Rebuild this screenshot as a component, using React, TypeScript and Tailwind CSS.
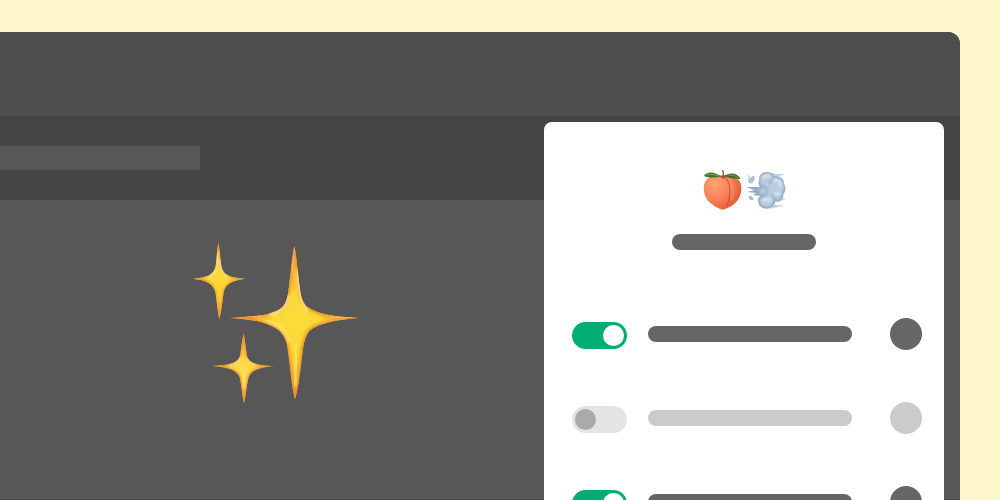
const star =
  "M343 48 C350 80 354 135 361 185 C365 212 374 226 387 234 C420 254 465 260 536 264 C465 270 420 279 390 301 C375 318 372 340 369 356 C362 405 357 470 345 508 C335 470 330 405 323 356 C320 335 314 317 296 301 C265 279 225 268 150 264 C225 260 265 256 296 239 C314 229 320 215 325 185 C332 135 336 80 343 48Z";
const smallTop =
  "M115 38 C119 58 121 85 124 108 C128 134 150 144 195 146 C155 152 137 161 131 186 C128 210 124 245 118 268 C113 245 110 210 106 186 C99 161 82 151 38 146 C80 143 101 136 107 109 C110 85 111 58 115 38Z";
const smallBottom =
  "M191 310 C194 328 197 350 200 373 C204 400 228 406 284 408 C232 412 212 423 205 444 C200 465 198 500 192 520 C187 500 184 465 180 444 C173 423 152 412 96 408 C152 406 176 399 181 373 C184 350 187 328 191 310Z";

function Sparkles() {
  return (
    <svg viewBox="0 0 570 555" className="h-[185px] w-[190px]" role="img" aria-label="Sparkles">
      <defs>
        <filter id="soft" x="-20%" y="-20%" width="140%" height="140%">
          <feGaussianBlur stdDeviation="4" />
        </filter>
        <filter id="fine" x="-20%" y="-20%" width="140%" height="140%">
          <feGaussianBlur stdDeviation="2.5" />
        </filter>
        <radialGradient id="gold" gradientUnits="userSpaceOnUse" cx="343" cy="270" r="235">
          <stop offset="0" stopColor="#fbdc36" />
          <stop offset=".5" stopColor="#fbd63a" />
          <stop offset="1" stopColor="#eda552" />
        </radialGradient>
        <radialGradient id="goldTop" gradientUnits="userSpaceOnUse" cx="117" cy="148" r="115">
          <stop offset="0" stopColor="#fddb35" />
          <stop offset=".5" stopColor="#fccf38" />
          <stop offset="1" stopColor="#e8a45a" />
        </radialGradient>
        <radialGradient id="goldBottom" gradientUnits="userSpaceOnUse" cx="191" cy="415" r="100">
          <stop offset="0" stopColor="#fee24d" />
          <stop offset=".5" stopColor="#fbc83a" />
          <stop offset="1" stopColor="#e49d52" />
        </radialGradient>
        <clipPath id="bigClip"><path d={star} /></clipPath>
        <clipPath id="topClip"><path d={smallTop} /></clipPath>
        <clipPath id="bottomClip"><path d={smallBottom} /></clipPath>
      </defs>
      <path d={star} fill="url(#gold)" />
      <g clipPath="url(#bigClip)" fill="none">
        <path d={star} stroke="#f19228" strokeWidth="12" filter="url(#soft)" />
        <path d="M353 120C355 175 362 225 384 242M327 195C321 230 302 247 268 256" stroke="#ffeaa0" strokeWidth="7" filter="url(#fine)" />
        <path d="M255 270C295 282 318 300 326 335" stroke="#fff080" strokeWidth="8" opacity=".75" filter="url(#fine)" />
        <path d="M348 340C350 375 348 420 345 470" stroke="#ffe765" strokeWidth="8" opacity=".8" filter="url(#fine)" />
        <path d="M342 80V180M235 264H275M430 264H500" stroke="#ffad30" strokeWidth="7" opacity=".8" filter="url(#fine)" />
        <path d="M343 52L337 120M170 261L240 259M455 261L520 263" stroke="#f7c08a" strokeWidth="3" opacity=".7" />
      </g>
      <path d={smallTop} fill="url(#goldTop)" />
      <g clipPath="url(#topClip)" fill="none">
        <path d={smallTop} stroke="#f19c2c" strokeWidth="7" filter="url(#fine)" />
        <path d="M114 66C112 108 108 132 84 144M121 90C123 124 129 133 145 141" stroke="#ffefb4" strokeWidth="5" filter="url(#fine)" />
      </g>
      <path d={smallBottom} fill="url(#goldBottom)" />
      <g clipPath="url(#bottomClip)" fill="none">
        <path d={smallBottom} stroke="#ef972c" strokeWidth="7" filter="url(#fine)" />
        <path d="M182 382C177 397 168 403 146 407M202 385C205 397 212 401 228 405M192 430V475" stroke="#fff090" strokeWidth="5" filter="url(#fine)" />
      </g>
    </svg>
  );
}

function Peach() {
  return (
    <svg viewBox="33 30 123 126" className="h-[42px] w-[41px]" role="img" aria-label="Peach">
      <defs>
        <radialGradient id="flesh" gradientUnits="userSpaceOnUse" cx="72" cy="72" r="95">
          <stop offset="0" stopColor="#fda375" />
          <stop offset=".5" stopColor="#f98054" />
          <stop offset="1" stopColor="#dc5036" />
        </radialGradient>
        <filter id="peachBlur"><feGaussianBlur stdDeviation="2.5" /></filter>
      </defs>
      <path d="M94 49C112 43 141 48 149 70C156 98 145 124 120 139C110 144 101 149 95 149C84 147 61 135 50 121C34 98 34 67 52 54C64 45 83 43 94 49Z" fill="url(#flesh)" />
      <path d="M103 52C113 62 118 81 117 101C116 116 112 127 107 136" fill="none" stroke="#c04a2a" strokeWidth="3" />
      <path d="M114 58C124 74 129 91 122 118" fill="none" stroke="#ffab7b" strokeWidth="5" opacity=".65" filter="url(#peachBlur)" />
      <path d="M39 48C46 34 68 33 91 49C74 54 53 54 39 48Z" fill="#40742b" />
      <path d="M99 48C117 36 138 38 149 57C132 57 114 54 99 48Z" fill="#386a28" />
      <path d="M47 45C60 41 74 44 84 48M110 46C122 43 132 47 141 53" fill="none" stroke="#79a645" strokeWidth="3" />
      <path d="M95 32C98 38 97 44 97 51" fill="none" stroke="#79604a" strokeWidth="4" strokeLinecap="round" />
      <path d="M86 49C92 45 102 45 108 50C103 53 99 55 97 57C93 55 90 52 86 49Z" fill="#a2572f" />
    </svg>
  );
}

const cloud =
  "M205 60C202 47 212 36 227 36C240 35 247 42 250 49C268 46 280 58 278 71C286 80 284 96 276 103C280 116 268 127 253 124C251 137 240 146 226 146C211 146 200 134 201 119C202 113 206 110 209 108L186 104L197 98L168 96L192 91L166 81L207 81C202 74 202 66 205 60Z";

function Puff() {
  return (
    <svg viewBox="162 30 126 126" className="size-[42px]" role="img" aria-label="Dash">
      <defs>
        <filter id="mist" x="-30%" y="-30%" width="160%" height="160%"><feGaussianBlur stdDeviation="3.5" /></filter>
        <clipPath id="cloudClip"><path d={cloud} /></clipPath>
      </defs>
      <path d="M236 40L282 43L252 53ZM216 132L280 137L236 146ZM262 112L283 117L258 126Z" fill="#c3d2e3" />
      <path d={cloud} fill="#b9cadd" />
      <g clipPath="url(#cloudClip)" fill="none">
        <path d={cloud} stroke="#8ea7c3" strokeWidth="9" filter="url(#mist)" />
        <path d="M213 58C218 46 234 44 240 54M248 63C262 57 272 68 268 82M214 124C220 116 232 116 240 124M250 98C258 105 264 103 268 96" stroke="#dce6f0" strokeWidth="10" opacity=".85" filter="url(#mist)" />
        <path d="M205 79C219 77 227 84 229 92C227 102 219 108 208 108M240 54C242 62 240 68 235 72M251 124C252 115 247 108 242 106" stroke="#89a3c2" strokeWidth="5" opacity=".75" filter="url(#mist)" />
      </g>
      <path d="M188 48C191 59 186 69 178 69C168 66 172 57 188 48Z" fill="#afc3d9" stroke="#8ea9c8" strokeWidth="2" />
      <path d="M170 47L177 50M171 54L176 56" stroke="#a4bbd4" strokeWidth="3" />
      <path d="M173 107C183 107 189 114 186 120C179 122 173 117 173 107Z" fill="#a3bad4" />
    </svg>
  );
}

const rows = [
  { label: "First option", on: true },
  { label: "Second option", on: false },
  { label: "Third option", on: true },
];

function OptionRow({ label, on }: { label: string; on: boolean }) {
  const tone = on ? "bg-[#666666]" : "bg-[#cbcbcb]";
  return (
    <li className="flex h-8 items-center">
      <div className="flex pt-[3px]">
        <input
          type="checkbox"
          role="switch"
          aria-label={label}
          defaultChecked={on}
          className="flex h-[27px] w-[55px] shrink-0 appearance-none items-center rounded-full bg-[#e4e4e4] px-[3px] before:size-[21px] before:rounded-full before:bg-[#aaaaaa] before:content-[''] checked:justify-end checked:bg-[#00ae75] checked:before:bg-white"
        />
      </div>
      <div className={`ml-[21px] mr-[38px] h-4 flex-1 rounded-full ${tone}`} />
      <button type="button" aria-label={`${label} details`} className={`size-8 shrink-0 rounded-full ${tone}`} />
    </li>
  );
}

export default function App() {
  return (
    <div className="h-screen overflow-hidden bg-[#fff8cc] pr-10 pt-8">
      <div className="relative flex h-full flex-col overflow-hidden rounded-tr-xl bg-[#575757]">
        <header className="h-[84px] shrink-0 bg-[#4e4e4e]" />
        <div className="flex h-[84px] shrink-0 items-center bg-[#444444]">
          <div className="h-6 w-[200px] bg-[#575757]" />
        </div>
        <main className="flex-1 border-b border-[#4f4c4e] pl-[180px] pt-[30px]">
          <Sparkles />
        </main>
        <aside className="absolute right-4 top-[90px] w-[400px] rounded-lg bg-white pb-8 pl-7 pr-[22px] pt-12">
          <div className="mr-1.5 flex flex-col items-center">
            <div className="flex gap-0.5">
              <Peach />
              <Puff />
            </div>
            <div className="mt-[22px] h-4 w-36 rounded-full bg-[#666666]" />
          </div>
          <ul className="mt-[68px] flex flex-col gap-[52px]">
            {rows.map((row) => (
              <OptionRow key={row.label} {...row} />
            ))}
          </ul>
        </aside>
      </div>
    </div>
  );
}
